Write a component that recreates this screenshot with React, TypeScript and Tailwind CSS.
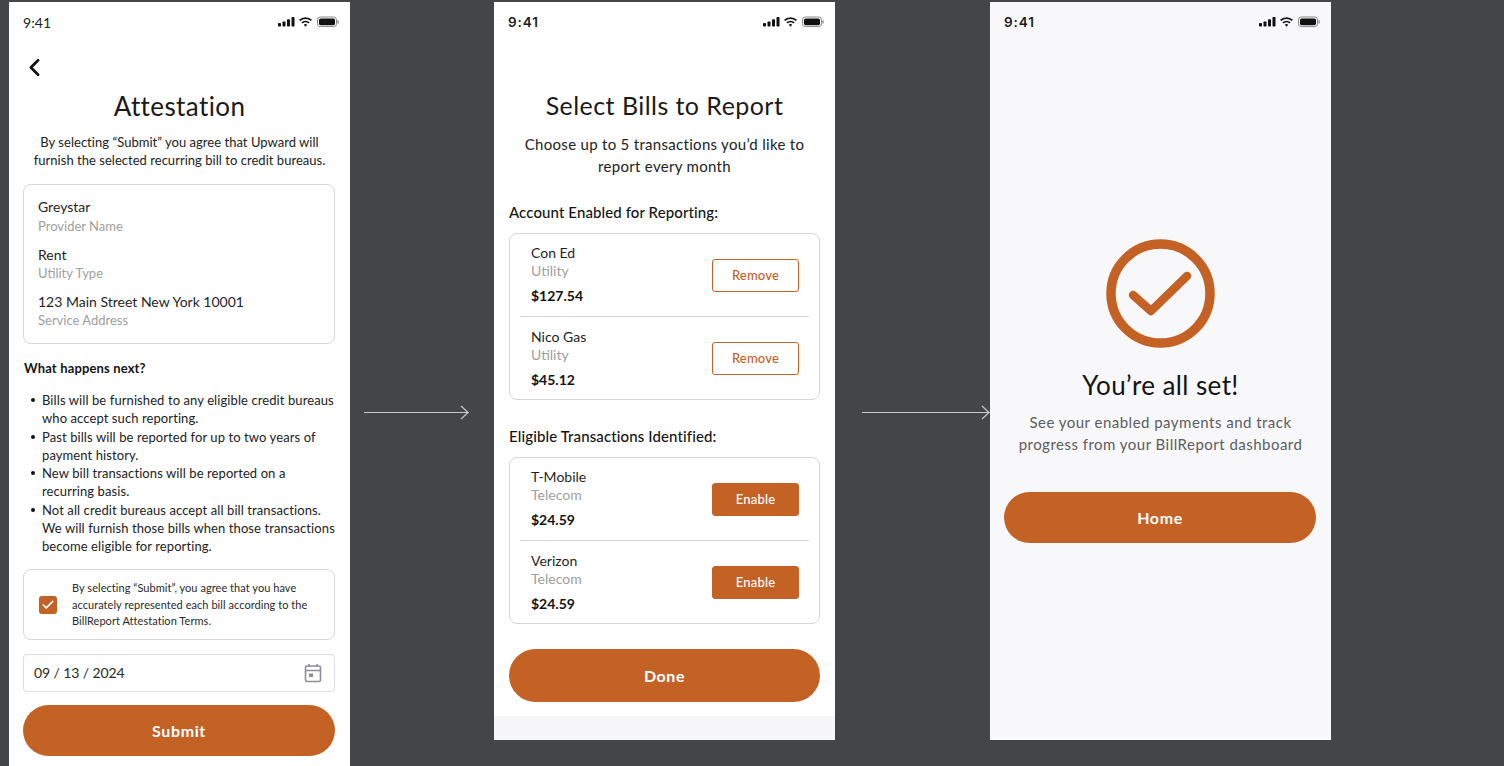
import React from 'react'
import { ChevronLeft, Check } from 'lucide-react'

const font = { fontFamily: 'Lato, "Open Sans", sans-serif' }

function StatusBar({ bold }: { bold?: boolean }) {
  return (
    <div className="flex h-[42px] items-center justify-between pb-[2px] pl-[14px] pr-[11px]">
      {bold ? (
        <span className="font-['Inter'] text-[13.5px] font-semibold tracking-[0.9px] text-[#1c1c1e]">9:41</span>
      ) : (
        <span className="text-[14px] tracking-[0.1px] text-[#1c1c1e]">9:41</span>
      )}
      <svg width="61" height="12" viewBox="0 0 61 12" fill="#111">
        <rect x="0" y="7" width="3" height="3.5" rx="0.7" />
        <rect x="4.5" y="5.5" width="3" height="5" rx="0.7" />
        <rect x="9" y="3.2" width="3" height="7.3" rx="0.7" />
        <rect x="13.5" y="1" width="3" height="9.5" rx="0.7" />
        <path d="M21 3.8a9.4 9.4 0 0 1 13 0l-1.2 1.3a7.7 7.7 0 0 0-10.6 0zM23.4 6.3a6 6 0 0 1 8.2 0l-1.2 1.3a4.3 4.3 0 0 0-5.8 0zM25.8 8.8a2.5 2.5 0 0 1 3.4 0L27.5 10.7z" />
        <rect x="39.5" y="1" width="19" height="9.6" rx="2.8" fill="none" stroke="#888" strokeWidth="1" />
        <rect x="41" y="2.4" width="16" height="6.8" rx="1.6" />
        <rect x="59.4" y="4.2" width="1.3" height="3.4" rx="0.6" fill="#888" />
      </svg>
    </div>
  )
}

function Pill({ label, className }: { label: string; className: string }) {
  return (
    <div className={`flex items-center justify-center rounded-full bg-[#c46226] text-[16px] font-bold tracking-[0.6px] text-white ${className}`}>
      {label}
    </div>
  )
}

function Arrow({ width }: { width: string }) {
  return (
    <div className={`relative h-[1px] shrink-0 bg-[#c9c9c9] ${width}`}>
      <svg className="absolute right-0 top-[-7px]" width="9" height="15" viewBox="0 0 9 15" fill="none" stroke="#c9c9c9" strokeWidth="1.2">
        <path d="M1 1l7 6.5L1 14" />
      </svg>
    </div>
  )
}

function Field({ value, label, gap }: { value: string; label: string; gap: string }) {
  return (
    <div className={gap}>
      <div className="text-[14px] leading-[18px] text-[#1f1f1f]">{value}</div>
      <div className="mt-[0.5px] text-[13px] leading-[18px] text-[#a0a0a0]">{label}</div>
    </div>
  )
}

function BillRow({ name, type, amount, action, filled, shift }: { name: string; type: string; amount: string; action: string; filled?: boolean; shift: string }) {
  return (
    <div className="flex flex-1 items-center justify-between pl-[21px] pr-[20px]">
      <div className={shift}>
        <div className="text-[14px] leading-[18px] text-[#1f1f1f]">{name}</div>
        <div className="text-[14px] leading-[18px] text-[#a0a0a0]">{type}</div>
        <div className="mt-[7px] text-[14px] font-bold leading-[18px] text-[#141414]">{amount}</div>
      </div>
      <div className={`flex h-[33px] w-[87px] items-center justify-center rounded-[3px] border border-[#c46226] pt-[1px] text-[13px] font-medium tracking-[0.2px] ${filled ? 'bg-[#c46226] text-white' : 'text-[#c46226]'}`}>
        {action}
      </div>
    </div>
  )
}

function BillCard({ children }: { children: React.ReactNode[] }) {
  return (
    <div className="mx-[15px] flex h-[167px] flex-col rounded-[8px] border border-[#d6d6d6]">
      {children[0]}
      <div className="mx-[10px] h-[1px] bg-[#d6d6d6]" />
      {children[1]}
    </div>
  )
}

function AttestationScreen() {
  const bullets = [
    'Bills will be furnished to any eligible credit bureaus who accept such reporting.',
    'Past bills will be reported for up to two years of payment history.',
    'New bill transactions will be reported on a recurring basis.',
    'Not all credit bureaus accept all bill transactions. We will furnish those bills when those transactions become eligible for reporting.',
  ]
  return (
    <div className="h-[790px] w-[341px] shrink-0 bg-white">
      <StatusBar />
      <ChevronLeft className="ml-[10.5px] mt-[9px] text-[#111]" size={29} strokeWidth={2.2} />
      <h1 className="mt-[6px] text-center text-[26px] leading-[36px] tracking-[0.4px] text-[#1a1a1a]">Attestation</h1>
      <p className="mt-[9px] text-center text-[13px] leading-[18px] tracking-[0.03px] text-[#222]">
        By selecting “Submit” you agree that Upward will
        <br />
        furnish the selected recurring bill to credit bureaus.
      </p>
      <div className="ml-[14px] mr-[15px] mt-[15px] h-[160px] rounded-[8px] border border-[#d6d6d6] px-[14px] pt-[13px]">
        <Field value="Greystar" label="Provider Name" gap="" />
        <Field value="Rent" label="Utility Type" gap="mt-[11px]" />
        <Field value="123 Main Street New York 10001" label="Service Address" gap="mt-[10.5px]" />
      </div>
      <div className="mx-[15px] mt-[15px] text-[13px] font-bold leading-[18px] tracking-[0.15px] text-[#141414]">What happens next?</div>
      <ul className="ml-[22px] mr-[14px] mt-[14px] text-[13px] leading-[18.25px] tracking-[0.09px] text-[#222]">
        {bullets.map((b) => (
          <li key={b} className="flex">
            <span className="mr-[7px] mt-[7px] h-[4px] w-[4px] shrink-0 rounded-full bg-[#111]" />
            <span>{b}</span>
          </li>
        ))}
      </ul>
      <div className="ml-[14px] mr-[15px] mt-[14px] flex h-[71px] items-center rounded-[8px] border border-[#d6d6d6] pl-[15px] pr-[12px]">
        <div className="flex h-[18px] w-[18px] shrink-0 items-center justify-center rounded-[3px] bg-[#c46226]">
          <Check size={14} strokeWidth={3} className="text-white" />
        </div>
        <p className="ml-[15px] text-[11px] leading-[16.3px] tracking-[0.05px] text-[#2a2a2a]">
          By selecting “Submit”, you agree that you have accurately represented each bill according to the BillReport Attestation Terms.
        </p>
      </div>
      <div className="ml-[14px] mr-[15px] mt-[14px] flex h-[38px] items-center justify-between rounded-[4px] border border-[#dcdee3] pb-[1px] pl-[10px] pr-[12px]">
        <span className="text-[14px] tracking-[-0.1px] text-[#2a2a2a]">09 / 13 / 2024</span>
        <svg width="18" height="20" viewBox="0 0 18 20" fill="none" stroke="#8e8f94" strokeWidth="1.6">
          <rect x="1.5" y="3" width="15" height="15.5" rx="1.5" />
          <path d="M1.5 7.5h15M5 1v3M13 1v3" />
          <rect x="5" y="10.5" width="4" height="3.5" fill="#8e8f94" stroke="none" />
        </svg>
      </div>
      <Pill label="Submit" className="ml-[14px] mr-[15px] mt-[13px] h-[51px]" />
    </div>
  )
}

function SelectBillsScreen() {
  return (
    <div className="flex h-[738px] w-[341px] shrink-0 flex-col bg-[#f7f7f9]">
      <div className="h-[714px] bg-white">
        <StatusBar bold />
        <h1 className="mt-[43px] text-center text-[25px] leading-[36px] tracking-[0.45px] text-[#1a1a1a]">Select Bills to Report</h1>
        <p className="mt-[10px] text-center text-[15px] leading-[22px] tracking-[0.3px] text-[#222]">
          Choose up to 5 transactions you’d like to
          <br />
          report every month
        </p>
        <div className="mx-[15px] mt-[25px] text-[15px] font-medium leading-[20px] tracking-[0.1px] text-[#141414]">Account Enabled for Reporting:</div>
        <div className="mt-[11px]">
          <BillCard>
            <BillRow name="Con Ed" type="Utility" amount="$127.54" action="Remove" shift="mb-[2px]" />
            <BillRow name="Nico Gas" type="Utility" amount="$45.12" action="Remove" shift="mt-[0px]" />
          </BillCard>
        </div>
        <div className="mx-[15px] mt-[26px] text-[15px] font-medium leading-[20px] tracking-[0.12px] text-[#141414]">Eligible Transactions Identified:</div>
        <div className="mt-[11px]">
          <BillCard>
            <BillRow name="T-Mobile" type="Telecom" amount="$24.59" action="Enable" filled shift="mb-[2px]" />
            <BillRow name="Verizon" type="Telecom" amount="$24.59" action="Enable" filled shift="mt-[0px]" />
          </BillCard>
        </div>
        <Pill label="Done" className="mx-[15px] mt-[25px] h-[53px]" />
      </div>
    </div>
  )
}

function DoneScreen() {
  return (
    <div className="flex h-[738px] w-[341px] shrink-0 flex-col bg-[#f8f8fa]">
      <StatusBar bold />
      <svg className="ml-[116px] mt-[195px]" width="109" height="110" viewBox="0 0 109 110" fill="none" stroke="#c46226">
        <circle cx="54.5" cy="54.5" r="49.5" strokeWidth="9.5" />
        <path d="M27 56l18 16 36-35" strokeWidth="8.5" strokeLinecap="round" strokeLinejoin="round" />
      </svg>
      <h1 className="mt-[18px] text-center text-[26px] leading-[36px] tracking-[0.4px] text-[#141414]">You’re all set!</h1>
      <p className="mt-[8px] text-center text-[15px] leading-[22px] tracking-[0.48px] text-[#5c5c60]">
        See your enabled payments and track
        <br />
        progress from your BillReport dashboard
      </p>
      <Pill label="Home" className="ml-[14px] mr-[15px] mt-[37px] h-[51px]" />
    </div>
  )
}

export default function App() {
  return (
    <div className="h-[766px] w-[1504px] overflow-hidden bg-[#444547] pl-[9px] pt-[2px]" style={font}>
      <div className="flex items-start">
        <AttestationScreen />
        <div className="w-[144px] shrink-0 pl-[14px] pt-[410px]">
          <Arrow width="w-[105px]" />
        </div>
        <SelectBillsScreen />
        <div className="w-[155px] shrink-0 pl-[27px] pt-[410px]">
          <Arrow width="w-[128px]" />
        </div>
        <DoneScreen />
      </div>
    </div>
  )
}
